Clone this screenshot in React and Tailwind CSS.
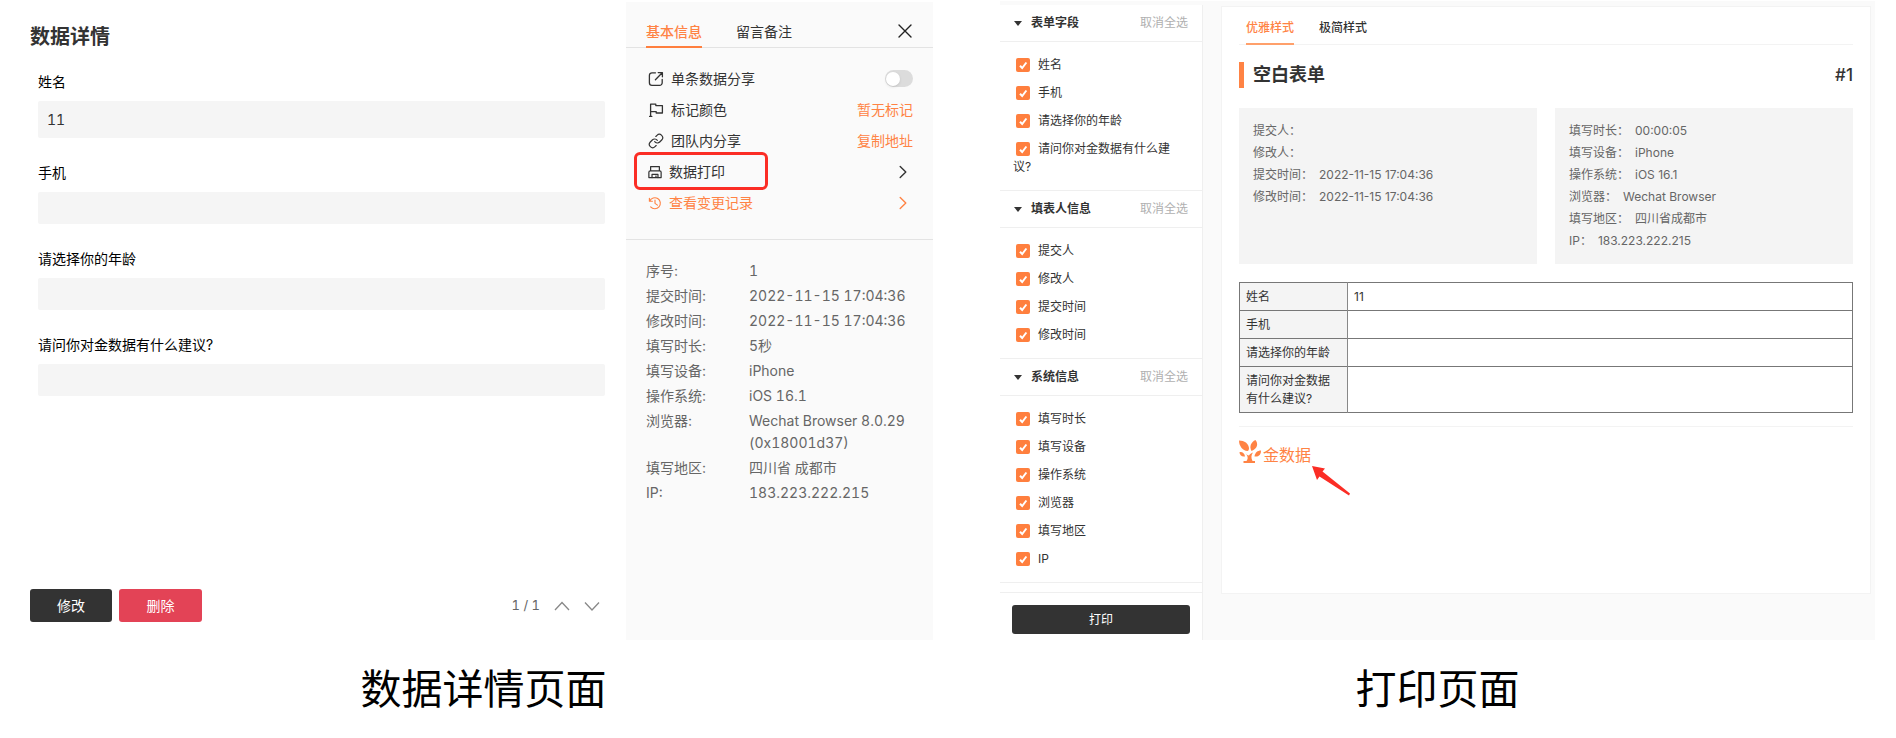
import { Link } from "lucide-react";

const fields = [
  { id: "name", label: "姓名", value: "11" },
  { id: "phone", label: "手机", value: "" },
  { id: "age", label: "请选择你的年龄", value: "" },
  { id: "advice", label: "请问你对金数据有什么建议?", value: "" },
];

const info = [
  ["序号:", "1"],
  ["提交时间:", "2022-11-15 17:04:36"],
  ["修改时间:", "2022-11-15 17:04:36"],
  ["填写时长:", "5秒"],
  ["填写设备:", "iPhone"],
  ["操作系统:", "iOS 16.1"],
  ["浏览器:", "Wechat Browser 8.0.29 (0x18001d37)"],
  ["填写地区:", "四川省 成都市"],
  ["IP:", "183.223.222.215"],
];

const groups = [
  { title: "表单字段", items: ["姓名", "手机", "请选择你的年龄", "请问你对金数据有什么建议?"] },
  { title: "填表人信息", items: ["提交人", "修改人", "提交时间", "修改时间"] },
  { title: "系统信息", items: ["填写时长", "填写设备", "操作系统", "浏览器", "填写地区", "IP"] },
];

const submitInfo = [
  ["提交人：", ""],
  ["修改人：", ""],
  ["提交时间：", "2022-11-15 17:04:36"],
  ["修改时间：", "2022-11-15 17:04:36"],
];

const systemInfo = [
  ["填写时长：", "00:00:05"],
  ["填写设备：", "iPhone"],
  ["操作系统：", "iOS 16.1"],
  ["浏览器：", "Wechat Browser"],
  ["填写地区：", "四川省成都市"],
  ["IP：", "183.223.222.215"],
];

function Icon({ className = "size-4", children, width = 1.3 }) {
  return (
    <svg viewBox="0 0 16 16" className={className} fill="none" stroke="currentColor" strokeWidth={width} strokeLinecap="round" strokeLinejoin="round" aria-hidden="true">
      {children}
    </svg>
  );
}

const ShareIcon = () => (
  <Icon>
    <path d="M7.5 1.8H4A2.6 2.6 0 0 0 1.4 4.4v7.4A2.6 2.6 0 0 0 4 14.4h7.6a2.6 2.6 0 0 0 2.6-2.6V8.4" />
    <path d="M10.2 1.6h4.2v4.2M14.2 1.8 7.4 8.8" />
  </Icon>
);
const FlagIcon = () => (
  <Icon>
    <path d="M2.6 14.4V2.2h5.2v1.4h6.6V11H8.2V9.600H2.6M1.6 14.4h2.200" />
  </Icon>
);
const PrintIcon = () => (
  <Icon className="size-3.5" width={1.4}>
    <path d="M3 6.800V1.800h10v5M1 14.400V8.400a1.600 1.600 0 0 1 1.600-1.600h10.800A1.600 1.600 0 0 1 15 8.400v6z" />
    <path d="M4.600 14.400v-3.600h6.800v3.600M8.800 12.800h.6" />
  </Icon>
);
const HistoryIcon = () => (
  <Icon className="size-3.5" width={1.3}>
    <path d="M1.600 2.600v3.400h3.400M2 5.800A6.300 6.300 0 1 1 3 12.400M8 4.600v3.800l2.800 2" />
  </Icon>
);
const ChevronRight = () => (
  <Icon className="size-4" width={1.4}>
    <path d="m5.200 2.600 5.600 5.400-5.600 5.400" />
  </Icon>
);

function ActionRow({ icon, label, children, tone = "text-[#333]" }) {
  return (
    <li className={`flex h-[31px] items-center justify-between ${tone}`}>
      <span className="flex items-center gap-[7px]">
        {icon}
        {label}
      </span>
      {children}
    </li>
  );
}

function DetailForm() {
  return (
    <section className="flex flex-1 flex-col pb-[18px] pl-[30px] pr-[21px] pt-[21px]">
      <h1 className="text-xl leading-8 font-bold text-[#333]">数据详情</h1>
      <form className="flex flex-col gap-[23px] pl-2 pt-[17px]">
        {fields.map((f) => (
          <div key={f.id} className="flex flex-col gap-[7px]">
            <label htmlFor={f.id} className="text-sm leading-6 text-black">{f.label}</label>
            <input
              id={f.id}
              defaultValue={f.value}
              className={`w-full rounded-xs bg-[#f5f5f5] px-[9px] text-sm text-[#333] tabular-nums outline-none ${f.value ? "h-[37px]" : "h-8"}`}
            />
          </div>
        ))}
      </form>
      <div className="mt-auto flex items-center justify-between">
        <div className="flex gap-[7px] text-sm text-white">
          <button type="button" className="h-[33px] w-[82px] rounded-[3px] bg-[#333]">修改</button>
          <button type="button" className="h-[33px] w-[83px] rounded-[3px] bg-[#e34356]">删除</button>
        </div>
        <div className="flex items-center gap-[14px] pr-[5px] text-[13px] text-[#666] tabular-nums">
          <span>1 / 1</span>
          <button type="button" aria-label="上一条">
            <svg viewBox="0 0 16 16" className="size-4" fill="none" stroke="#888" strokeWidth="1.3"><path d="m1 12 7-7.500 7 7.500" /></svg>
          </button>
          <button type="button" aria-label="下一条">
            <svg viewBox="0 0 16 16" className="size-4" fill="none" stroke="#888" strokeWidth="1.3"><path d="m1 4.500 7 7.500 7-7.500" /></svg>
          </button>
        </div>
      </div>
    </section>
  );
}

function DetailSide() {
  return (
    <aside className="mt-0.5 flex w-[307px] flex-col bg-[#fafafa] text-sm">
      <div className="flex h-[46px] items-end justify-between border-b border-[#e3e3e3] pl-5 pr-5">
        <div className="flex gap-[34px]">
          <button type="button" className="-mb-px border-b-2 border-[#ff7f3e] pb-0.5 leading-6 font-medium text-[#ff8344]">基本信息</button>
          <button type="button" className="-mb-px border-b-2 border-transparent pb-0.5 leading-6 text-[#333]">留言备注</button>
        </div>
        <button type="button" aria-label="关闭" className="mb-2 text-[#222]">
          <Icon width={1.4}><path d="m2 2 12 12M14 2 2 14" /></Icon>
        </button>
      </div>
      <ul className="relative border-b border-[#e3e3e3] pb-[21px] pl-[22px] pr-5 pt-[15px]">
        <ActionRow icon={<ShareIcon />} label="单条数据分享">
          <input type="checkbox" role="switch" aria-label="单条数据分享" className="flex h-[17px] w-7 appearance-none items-center rounded-full bg-[#dcdcdc] px-px before:size-3.5 before:rounded-full before:bg-white before:shadow-sm" />
        </ActionRow>
        <ActionRow icon={<FlagIcon />} label="标记颜色">
          <button type="button" className="text-[#ff8344]">暂无标记</button>
        </ActionRow>
        <ActionRow icon={<Link className="size-4" strokeWidth={1.8} aria-hidden="true" />} label="团队内分享">
          <button type="button" className="text-[#ff8344]">复制地址</button>
        </ActionRow>
        <ActionRow icon={<PrintIcon />} label="数据打印">
          <button type="button" aria-label="数据打印" className="mr-0.5"><ChevronRight /></button>
        </ActionRow>
        <ActionRow icon={<HistoryIcon />} label="查看变更记录" tone="text-[#ff8344]">
          <button type="button" aria-label="查看变更记录" className="mr-0.5"><ChevronRight /></button>
        </ActionRow>
        <li aria-hidden="true" className="absolute left-2 top-[104px] h-[38px] w-[134px] rounded-md border-3 border-[#fb2d25]" />
      </ul>
      <dl className="flex flex-col gap-[3px] pl-5 pr-4 pt-5 leading-[22px] text-[#666]">
        {info.map(([k, v]) => (
          <div key={k} className="flex">
            <dt className="w-[103px] shrink-0">{k}</dt>
            <dd className="tabular-nums">{v}</dd>
          </div>
        ))}
      </dl>
    </aside>
  );
}

function PrintSidebar() {
  return (
    <aside className="mt-1 flex w-[203px] flex-col border-r border-[#efefef] bg-white text-xs leading-[18px] text-[#333]">
      {groups.map((g) => (
        <fieldset key={g.title} className="border-b border-[#efefef]">
          <div className="flex h-[37px] items-center border-b border-[#efefef] pl-[14px] pr-[14px]">
            <svg viewBox="0 0 8 5" className="mr-[9px] h-[5px] w-2" aria-hidden="true"><path d="M0 0h8L4 5z" fill="#333" /></svg>
            <strong className="font-bold">{g.title}</strong>
            <button type="button" className="ml-auto text-[#b0b0b0]">取消全选</button>
          </div>
          <div className="py-[9px] pl-[13px] pr-6">
            {g.items.map((t) => (
              <label key={t} className="block py-[5px]">
                <span className="relative ml-[3px] mr-2 inline-block size-3.5 align-[-3px]">
                  <input type="checkbox" defaultChecked className="block size-3.5 appearance-none rounded-xs bg-[#ff7f3e]" />
                  <svg viewBox="0 0 14 14" className="pointer-events-none absolute inset-0" fill="none" stroke="#fff" strokeWidth="2" aria-hidden="true"><path d="m4 7.700 2.200 2.300L10.400 4.500" /></svg>
                </span>
                {t}
              </label>
            ))}
          </div>
        </fieldset>
      ))}
      <div className="mt-auto border-t border-[#efefef] px-3 pb-[6px] pt-3">
        <button type="button" className="h-[29px] w-full rounded-[3px] bg-[#333] text-white">打印</button>
      </div>
    </aside>
  );
}

function InfoBox({ rows }) {
  return (
    <dl className="flex-1 bg-[#f4f4f4] pb-3 pl-[14px] pt-3 leading-[22px] text-[#666]">
      {rows.map(([k, v]) => (
        <div key={k} className="flex gap-1.5">
          <dt>{k}</dt>
          <dd>{v}</dd>
        </div>
      ))}
    </dl>
  );
}

function PrintPreview() {
  return (
    <div className="flex-1 bg-[#fafafa] pl-[18px] pr-[4px] pt-[5px] pb-[46px]">
      <article className="h-full border border-[#f3f3f3] bg-white px-[17px] text-xs">
        <div className="flex h-[38px] items-end gap-[25px] border-b border-[#f3f3f3] pl-[7px] font-medium">
          <button type="button" className="-mb-px border-b-2 border-[#ffa06b] pb-[5px] leading-5 text-[#ff8344]">优雅样式</button>
          <button type="button" className="-mb-px border-b-2 border-transparent pb-[5px] leading-5 text-[#333]">极简样式</button>
        </div>
        <div className="mt-[17px] flex items-center justify-between text-[#333]">
          <h2 className="border-l-5 border-[#ff8344] pl-[9px] text-lg leading-[26px] font-bold">空白表单</h2>
          <span className="text-[17px] font-medium">#1</span>
        </div>
        <div className="mt-5 flex gap-[18px]">
          <InfoBox rows={submitInfo} />
          <InfoBox rows={systemInfo} />
        </div>
        <table className="mt-[18px] w-full border-collapse border border-[#777] leading-[18px] text-[#333]">
          <tbody>
            {fields.map((f) => (
              <tr key={f.id} className="border-b border-[#777]">
                <th scope="row" className="w-[108px] border-r border-[#888] bg-[#f4f4f4] px-1.5 pt-[5px] pb-1 text-left align-top font-normal">{f.label}</th>
                <td className="px-1.5 pt-[5px] pb-1 align-top">{f.value}</td>
              </tr>
            ))}
          </tbody>
        </table>
        <div className="mt-[13px] border-t border-[#f3f3f3] pt-3">
          <div className="relative inline-flex items-center">
            <svg viewBox="0 0 44 48" className="h-6 w-[22px]" fill="#ff8344" aria-hidden="true">
              <path d="M0 1c11 0 19 6 20 15 0 3-1 6-3 6C7 21 0 12 0 1z" />
              <path d="M33 0c6 8 4 17-8 22C20 13 24 4 33 0z" />
              <path d="M1 24c6-1 10 2 11 9-7 1-11-3-11-9z" />
              <path d="M44 21c0 8-4 13-13 12 1-8 6-12 13-12z" />
              <path d="M12 25c3 4 5 6 8 6 1-2 3-4 8-6-4 5-4 11-1 17h5v4H9v-4h6c4-5 3-10-3-17z" />
            </svg>
            <span className="ml-0.5 pt-1.5 text-base leading-5 text-[#ff8344]">金数据</span>
            <svg viewBox="0 0 40 32" className="absolute left-full top-[26px] h-8 w-10" aria-hidden="true">
              <path d="M1 1 14 3.500l-2.500 3L39 28.500 38 30.500 8.500 11.500 6 15z" fill="#fb2d25" />
            </svg>
          </div>
        </div>
      </article>
    </div>
  );
}

export default function App() {
  return (
    <main className="flex w-full bg-white font-[Inter,'Noto_Sans_CJK_SC',sans-serif]">
      <figure className="flex w-[933px] shrink-0 flex-col">
        <div className="flex h-[640px]">
          <DetailForm />
          <DetailSide />
        </div>
        <figcaption className="pl-[34px] pt-[21px] text-center text-[41px] leading-[56px] text-black">数据详情页面</figcaption>
      </figure>
      <figure className="ml-[67px] mr-[21px] flex flex-1 flex-col">
        <div className="mt-px flex h-[639px] bg-[#fafafa]">
          <PrintSidebar />
          <PrintPreview />
        </div>
        <figcaption className="pt-[21px] text-center text-[41px] leading-[56px] text-black">打印页面</figcaption>
      </figure>
    </main>
  );
}
